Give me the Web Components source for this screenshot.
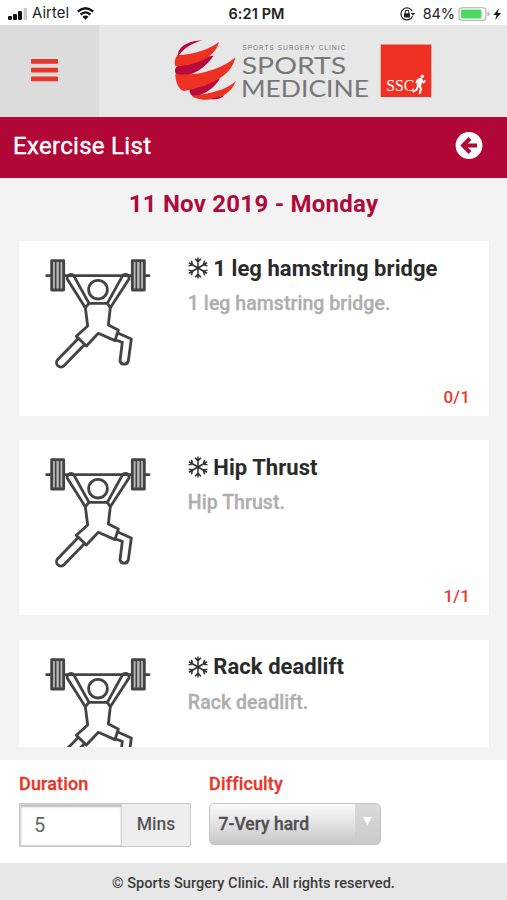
<!DOCTYPE html>
<html lang="en">
<head>
<meta charset="utf-8">
<title>Exercise List</title>
<style>
html,body{margin:0;height:100%}
body{font-family:Roboto,"Liberation Sans",sans-serif;background:#f3f3f3;overflow:hidden}
</style>
</head>
<body>
<exercise-app></exercise-app>
<script>
const define = (name, html, render) => customElements.define(name, class extends HTMLElement {
  constructor() {
    super();
    this.attachShadow({ mode: "open" }).innerHTML = html;
  }
  connectedCallback() { if (render) render(this, this.shadowRoot); }
});

define("status-bar", `
<style>
:host{display:grid;grid-template-columns:1fr auto 1fr;align-items:center;height:25px;padding:2px 5px 0 8px;box-sizing:border-box;background:#fff;color:#222;font:15px/23px Inter,sans-serif}
.side{display:flex;align-items:center}
.end{justify-content:flex-end}
svg{display:block}
.carrier{margin:0 8px 0 4px;font-size:14.800px;letter-spacing:.1px}
.time{font-weight:600;font-size:14.500px;letter-spacing:.1px;padding-left:3px}
.pct{margin:0 3px 0 8px;font-size:14.500px;letter-spacing:-.1px}
</style>
<div class="side">
 <svg width="20" height="14" viewBox="0 0 20 14"><g fill="#111"><rect y="9" width="4" height="4" rx="1"/><rect x="5" y="7" width="4" height="6" rx="1"/><rect x="10" y="4" width="4" height="9" rx="1"/></g><rect x="15.500" y="1" width="3.500" height="12" rx="1" fill="#c8c8c8"/></svg>
 <span class="carrier">Airtel</span>
 <svg width="17" height="13" viewBox="0 0 17 13" fill="none" stroke="#111" stroke-width="2.300"><path d="M.8 4.600Q8.500-2.200 16.200 4.600M3.500 7.600Q8.500 3.200 13.500 7.600"/><path d="M5.500 9.700Q8.500 7.200 11.500 9.700L8.500 12.800Z" fill="#111" stroke="none"/></svg>
</div>
<span class="time">6:21 PM</span>
<div class="side end">
 <svg width="15" height="14" viewBox="0 0 15 14"><path d="M12.300 4.200A6 6 0 1 0 12.500 9.200" fill="none" stroke="#222" stroke-width="1.200"/><path d="M10.800 6.100h4.200l-2.100 2.600z" fill="#222"/><rect x="4" y="6.200" width="6" height="4.300" rx=".6" fill="#222"/><path d="M5.200 6.500V5a1.800 1.800 0 0 1 3.600 0v1.500" fill="none" stroke="#222" stroke-width="1.100"/></svg>
 <span class="pct">84%</span>
 <svg width="44" height="14" viewBox="0 0 44 14"><rect x="1" y=".7" width="27" height="12.600" rx="3.300" fill="#fff" stroke="#aaa" stroke-width="1.100"/><rect x="3" y="2.600" width="20.500" height="8.800" rx="1.400" fill="#4cd964"/><path d="M29.500 4.800q2 .6 2 2.200t-2 2.200z" fill="#aaa"/><path d="M41 1.500L35.300 8h3.300l-1.500 5L43 6.100h-3.400z" fill="#111"/></svg>
</div>`);

define("clinic-logo", `
<style>:host{display:block;width:262px;height:70px}svg{display:block}text{fill:#777}</style>
<svg width="262" height="70" viewBox="172 35 262 70">
 <g transform="scale(.33333)">
  <g fill="#b60a3c"><path d="M608 121C565 122 529 142 534 172C546 148 572 131 608 121Z"/><path d="M641 167C610 170 570 180 530 200C522 207 523 220 535 228C580 228 614 205 641 167Z"/><path d="M660 235C632 243 600 255 569 268C567 278 574 288 584 293C612 282 646 264 660 235Z"/></g>
  <g fill="#ef3124"><path d="M657 125C635 145 583 164 533 165C524 173 523 188 526 199C579 196 645 178 657 125Z"/><path d="M706 172C668 207 588 232 526 221C526 247 536 268 552 273C620 262 696 230 706 172Z"/><path d="M708 242C682 270 624 282 576 287C592 300 620 301 635 298C670 291 696 275 708 242Z"/></g>
  <path d="M674 285C660 291 648 290 632 297C650 299 664 297 674 285Z" fill="#b60a3c"/>
 </g>
 <text x="242.500" y="49.800" font-family="Inter,sans-serif" font-size="6.700" textLength="103" lengthAdjust="spacing">SPORTS SURGERY CLINIC</text>
 <text x="241.700" y="73.500" font-family="Lato,sans-serif" font-size="23.600" textLength="104.500" lengthAdjust="spacingAndGlyphs">SPORTS</text>
 <text x="241" y="96.600" font-family="Lato,sans-serif" font-size="23.600" textLength="128" lengthAdjust="spacingAndGlyphs">MEDICINE</text>
 <rect x="380.700" y="44.500" width="50.600" height="52.500" fill="#ef3124"/>
 <text x="386.300" y="90.800" font-family="Liberation Serif,serif" font-size="17.500" textLength="28" lengthAdjust="spacingAndGlyphs" style="fill:#fff">SSC</text>
 <g fill="none" stroke="#fff" stroke-linecap="round" stroke-linejoin="round"><circle cx="422.300" cy="76.300" r="1.400" fill="#fff" stroke-width=".6"/><path d="M420.300 80L419 85" stroke-width="4.600"/><path d="M421.500 80.500l2.300 2 .900-1.500M418 79.500l-1.600 3" stroke-width="1.700"/><path d="M420 86l1 3-1.200 4.200M418 86l-1.300 3.500-3.200 2" stroke-width="2"/></g>
</svg>`);

define("site-header", `
<style>
:host{display:flex;height:92px;background:#e7e7e7}
.menu{display:flex;align-items:center;justify-content:center;width:99px;padding:0 10px 3px 0;box-sizing:border-box;background:#dcdcdc}
.logo{flex:1;padding:10px 0 0 73px}
</style>
<div class="menu"><svg width="27" height="24" viewBox="0 0 27 24" fill="#e8352b"><rect y="1" width="27" height="4.700" rx=".8"/><rect y="9.800" width="27" height="4.700" rx=".8"/><rect y="18.600" width="27" height="4.700" rx=".8"/></svg></div>
<div class="logo"><clinic-logo></clinic-logo></div>`);

define("title-bar", `
<style>
:host{display:flex;align-items:center;justify-content:space-between;height:61px;padding:0 24px 4px 13px;box-sizing:border-box;background:#b20838;color:#fff;font-size:24px;letter-spacing:.3px}
svg{display:block}
.t{padding-top:1px;-webkit-text-stroke:.4px #fff}
</style>
<span class="t"><slot></slot></span>
<svg width="28" height="28" viewBox="0 0 28 28"><circle cx="14" cy="13.500" r="13.400" fill="#fff"/><path d="M15 6.500L8 13.500l7 7M8.500 13.500H22" fill="none" stroke="#b20838" stroke-width="3.900"/></svg>`);

define("lifter-icon", `
<style>:host{display:block;width:113.330px;height:116.670px}svg{display:block}</style>
<svg width="113.330" height="116.670" viewBox="80 60 340 350" fill="none" stroke="#444" stroke-width="8.500" stroke-linejoin="round" stroke-linecap="round">
 <path d="M94 122H108M388 122H401M146 122H350"/>
 <rect x="109" y="77" width="36" height="88" fill="#bbb"/><rect x="351" y="77" width="36" height="88" fill="#bbb"/>
 <path d="M121 78V164M133 78V164M363 78V164M375 78V164" stroke-width="5"/>
 <circle cx="248" cy="164" r="28"/>
 <path d="M221 205L178 127A11 11 0 0 0 156 133L210 218L217 273L183 304L213 333L249 295L299 317L309 285L279 270L285 218L341 132A11 11 0 0 0 319 127L276 205Z"/>
 <path d="M221 205L210 218M276 205L285 218"/>
 <path d="M188 311L127 374A13 13 0 0 0 146 392L207 329M309 295L348 312L339 378A13 13 0 0 1 314 378L321 322L301 315"/>
</svg>`);

define("snow-icon", `
<style>:host{display:block;width:20px;height:22px}svg{display:block}</style>
<svg width="20" height="22" viewBox="-10 -11 20 22" fill="none" stroke="#303030" stroke-width="1.500"><defs><path id="a" d="M0 0V-10.500M-2.900-9.300L0-6.200L2.900-9.300"/></defs><use href="#a"/><use href="#a" transform="rotate(60)"/><use href="#a" transform="rotate(120)"/><use href="#a" transform="rotate(180)"/><use href="#a" transform="rotate(240)"/><use href="#a" transform="rotate(300)"/></svg>`);

define("exercise-card", `
<style>
:host{display:grid;grid-template-columns:113.330px 1fr;column-gap:33px;height:175px;padding:14px 19px 8px 22.500px;box-sizing:border-box;background:#fff;flex:none}
.info{display:flex;flex-direction:column}
.head{display:flex;align-items:center;gap:5.500px;height:26px;font-size:22px;font-weight:700;color:#2a2a2a;letter-spacing:.05px}
.desc{margin-top:10px;line-height:26px;font-size:19.500px;font-weight:500;color:#aeaeae;letter-spacing:.05px;-webkit-text-stroke:.3px}
.count{margin-top:auto;align-self:flex-end;font-size:17px;line-height:21px;font-weight:500;color:#e8392f;letter-spacing:.2px}
</style>
<lifter-icon></lifter-icon>
<div class="info"><div class="head"><snow-icon></snow-icon><span class="name"></span></div><div class="desc"></div></div>`,
(el, root) => {
  const name = el.getAttribute("name");
  root.querySelector(".name").textContent = name;
  root.querySelector(".desc").textContent = name + ".";
  if (el.hasAttribute("count")) {
    const count = document.createElement("div");
    count.className = "count";
    count.textContent = el.getAttribute("count");
    root.querySelector(".info").append(count);
  }
});

define("form-field", `
<style>:host{display:block}.label{height:22px;line-height:22px;font-size:18px;font-weight:500;color:#ea3328;margin-bottom:8px;letter-spacing:.15px;-webkit-text-stroke:.3px}</style>
<div class="label"></div><slot></slot>`,
(el, root) => { root.querySelector(".label").textContent = el.getAttribute("label"); });

define("minutes-input", `
<style>
:host{display:flex;width:172px;height:44px;box-sizing:border-box;border:1px solid #c9c9c9;font-size:18px;color:#666}
.v{flex:1;padding-left:13px;line-height:41px;font-size:20px;border:1px solid #d5d5d5;box-shadow:inset 0 2px 2px #bbb;box-sizing:border-box}
.u{width:68px;line-height:41px;text-align:center;background:#eee;font-weight:500;color:#555;font-size:17.500px;box-sizing:border-box}
</style>
<div class="v">5</div><div class="u">Mins</div>`);

define("level-select", `
<style>
:host{display:flex;width:172px;height:42px;box-sizing:border-box;border:1px solid #c3c3c3;border-radius:5px;overflow:hidden;background:linear-gradient(#fbfbfb,#c8c8c8);font-size:17.500px;font-weight:500;color:#505050}
.v{flex:1;padding-left:8.500px;line-height:41px;-webkit-text-stroke:.3px}
.a{width:25px;background:linear-gradient(#dadada,#cacaca);display:flex;justify-content:center;padding-top:13px;box-sizing:border-box}
svg{display:block}
</style>
<div class="v">7-Very hard</div><div class="a"><svg width="9" height="8" viewBox="0 0 9 8"><path d="M0 0H9L4.500 8Z" fill="#fff"/></svg></div>`);

define("exercise-app", `
<style>
:host{display:flex;flex-direction:column;width:507px;height:900px;background:#f3f3f3}
h1{margin:0;height:63px;line-height:52px;text-align:center;font-size:24px;font-weight:700;color:#ae0b3b;letter-spacing:.25px}
.list{display:flex;flex-direction:column;gap:24.300px;height:506px;margin:0 18px 0 19px;overflow:hidden}
.form{display:flex;gap:18px;margin-top:13px;height:103px;padding:13px 19px 0;box-sizing:border-box;background:#fff}
footer{height:37px;line-height:40px;background:#e7e7e7;text-align:center;font-size:14.600px;font-weight:500;color:#3c3c3c;letter-spacing:0}
</style>
<status-bar></status-bar>
<site-header></site-header>
<title-bar>Exercise List</title-bar>
<h1>11 Nov 2019 - Monday</h1>
<div class="list">
 <exercise-card name="1 leg hamstring bridge" count="0/1"></exercise-card>
 <exercise-card name="Hip Thrust" count="1/1"></exercise-card>
 <exercise-card name="Rack deadlift"></exercise-card>
</div>
<div class="form">
 <form-field label="Duration"><minutes-input></minutes-input></form-field>
 <form-field label="Difficulty"><level-select></level-select></form-field>
</div>
<footer>© Sports Surgery Clinic. All rights reserved.</footer>`);
</script>
</body>
</html>
